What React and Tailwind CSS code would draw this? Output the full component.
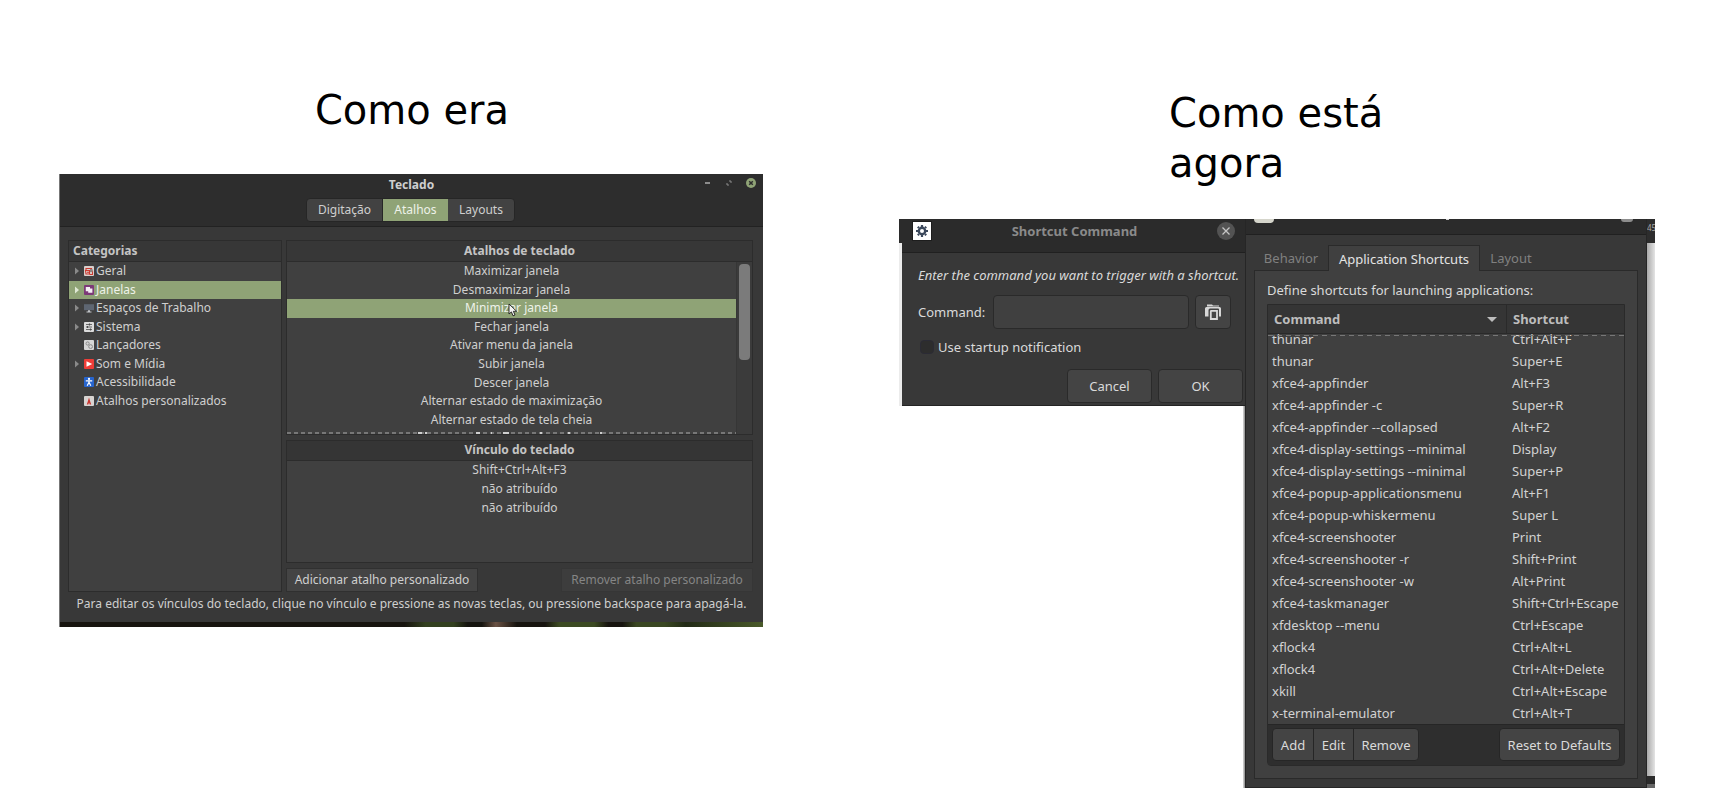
import React from "react";

const categories = [
  { name: "Geral", icon: "general", expandable: true },
  { name: "Janelas", icon: "windows", expandable: true, selected: true },
  { name: "Espaços de Trabalho", icon: "workspaces", expandable: true },
  { name: "Sistema", icon: "system", expandable: true },
  { name: "Lançadores", icon: "launchers" },
  { name: "Som e Mídia", icon: "media", expandable: true },
  { name: "Acessibilidade", icon: "access" },
  { name: "Atalhos personalizados", icon: "custom" },
];

const actions = [
  "Maximizar janela",
  "Desmaximizar janela",
  "Minimizar janela",
  "Fechar janela",
  "Ativar menu da janela",
  "Subir janela",
  "Descer janela",
  "Alternar estado de maximização",
  "Alternar estado de tela cheia",
];

const bindings = ["Shift+Ctrl+Alt+F3", "não atribuído", "não atribuído"];

const commands = [
  ["thunar", "Ctrl+Alt+F"],
  ["thunar", "Super+E"],
  ["xfce4-appfinder", "Alt+F3"],
  ["xfce4-appfinder -c", "Super+R"],
  ["xfce4-appfinder --collapsed", "Alt+F2"],
  ["xfce4-display-settings --minimal", "Display"],
  ["xfce4-display-settings --minimal", "Super+P"],
  ["xfce4-popup-applicationsmenu", "Alt+F1"],
  ["xfce4-popup-whiskermenu", "Super L"],
  ["xfce4-screenshooter", "Print"],
  ["xfce4-screenshooter -r", "Shift+Print"],
  ["xfce4-screenshooter -w", "Alt+Print"],
  ["xfce4-taskmanager", "Shift+Ctrl+Escape"],
  ["xfdesktop --menu", "Ctrl+Escape"],
  ["xflock4", "Ctrl+Alt+L"],
  ["xflock4", "Ctrl+Alt+Delete"],
  ["xkill", "Ctrl+Alt+Escape"],
  ["x-terminal-emulator", "Ctrl+Alt+T"],
];

function CategoryIcon({ kind }) {
  const art = {
    general: (
      <>
        <rect width="10" height="10" rx="1" fill="#d9cfcc" />
        <path d="M2 4.500V2.500H7.500V4M1.500 4.500H5.500V8H2ZM5.500 5H8.500V8.500H5.500M3 6.200H5" fill="none" stroke="#cb3a30" strokeWidth="1.100" />
        <path d="M6 3H8.500V6H6Z" fill="#8f8480" />
      </>
    ),
    windows: (
      <>
        <rect width="10" height="10" rx="1" fill="#7c3a78" />
        <path d="M1.800 2H6V3.400H8.400V7.800H4.200V6.200H1.800Z" fill="#f4eef4" />
      </>
    ),
    workspaces: (
      <>
        <path d="M0 1.200H10V7.200H0Z" fill="#5e6672" />
        <path d="M4 7.200H6V8.500H7.500V9.500H2.500V8.500H4Z" fill="#c3c6ca" />
      </>
    ),
    system: (
      <>
        <rect width="10" height="10" rx="1" fill="#dcdcdc" />
        <path d="M2 2.500H8M2 5H8M2 7.500H8" stroke="#6b6b6b" strokeWidth="1" />
        <path d="M5.500 1.500V3.500M3.500 4V6M6.500 6.500V8.500" stroke="#4c4c4c" strokeWidth="1.200" />
      </>
    ),
    launchers: (
      <>
        <rect width="10" height="10" rx="1" fill="#d6d6d6" />
        <circle cx="3.600" cy="3.500" r="1.600" fill="none" stroke="#8b8b8b" strokeWidth="1" />
        <circle cx="6.600" cy="6.600" r="1.900" fill="none" stroke="#8b8b8b" strokeWidth="1" />
      </>
    ),
    media: (
      <>
        <rect width="10" height="10" rx="1" fill="#ee3d38" />
        <path d="M2.500 2.200L8.200 5L2.500 7.800Z" fill="#fff" />
      </>
    ),
    access: (
      <>
        <rect width="10" height="10" rx="1" fill="#2765cf" />
        <circle cx="5" cy="1.900" r="1.100" fill="#fff" />
        <path d="M1.800 3.800H8.200M5 3.800V5.600M5 5.200L3.200 8.800M5 5.200L6.800 8.800" fill="none" stroke="#fff" strokeWidth="1.200" />
      </>
    ),
    custom: (
      <>
        <rect width="10" height="10" rx="1" fill="#d8d4d2" />
        <path d="M5 1.500L6.200 5.500L7.200 8.500H5.700L5 6.500L4.300 8.500H2.800L3.800 5.500Z" fill="#c8342e" />
      </>
    ),
  };
  return (
    <svg viewBox="0 0 10 10" className="h-[10px] w-[10px] shrink-0" aria-hidden="true">
      {art[kind]}
    </svg>
  );
}

function Triangle({ selected }) {
  return (
    <svg viewBox="0 0 4 8" className="h-2 w-1" aria-hidden="true">
      <path d="M0 0.500L4 4L0 7.500Z" fill={selected ? "#dfe8d4" : "#8a8a8a"} />
    </svg>
  );
}

function Pointer() {
  return (
    <svg viewBox="0 0 10 14" className="absolute top-1 left-1/2 h-[14px] w-[10px] -translate-x-1" aria-hidden="true">
      <path d="M1 1V11L3.400 8.900L5 12.800L7 12L5.400 8.300H8.600Z" fill="#f2f2f2" stroke="#1c1c1c" strokeWidth="0.900" />
    </svg>
  );
}

function OldWindow() {
  return (
    <section className="flex flex-col border-l border-[#777] bg-[#383838] text-[12px] leading-4 text-[#cfcfcf]">
      <header className="relative flex h-[53px] flex-col items-center border-b border-[#222] bg-[#2d2d2d]">
        <h2 className="mt-[3px] font-bold">Teclado</h2>
        <div className="absolute top-1 right-[7px] flex items-center gap-4">
          <button aria-label="Minimizar" className="flex h-[10px] w-[5px] items-center">
            <span className="h-[2px] w-full bg-[#8c8c8c]" />
          </button>
          <button aria-label="Maximizar" className="flex h-[10px] w-[6px] items-center">
            <svg viewBox="0 0 6 6" className="h-[6px] w-[6px]"><path d="M3 1H5V3M1 3V5H3" fill="none" stroke="#8c8c8c" /></svg>
          </button>
          <button aria-label="Fechar" className="-ml-[2px] h-[10px] w-[10px] rounded-full bg-[#8fa376]">
            <svg viewBox="0 0 10 10" className="h-[10px] w-[10px]"><path d="M3.200 3.200L6.800 6.800M6.800 3.200L3.200 6.800" stroke="#2d2d2d" strokeWidth="1.500" /></svg>
          </button>
        </div>
        <nav className="mt-[5px] mr-[2px] flex h-[24px] rounded-sm border border-[#262626] bg-[#424242]">
          <button className="w-[76px] border-r border-[#262626]">Digitação</button>
          <button className="w-[65px] bg-[#8fa376] text-[#eef2e9]">Atalhos</button>
          <button className="w-[66px]">Layouts</button>
        </nav>
      </header>

      <div className="flex gap-1 px-2 pt-[13px] pr-[10px]">
        <div className="flex w-[214px] flex-col border border-[#2c2c2c] bg-[#404040]">
          <h3 className="h-[21px] border-b border-[#2c2c2c] bg-[#373737] px-1 py-[2px] font-bold text-[#c4c4c4]">Categorias</h3>
          <ul className="grid h-[148px] auto-rows-fr">
            {categories.map((c) => (
              <li key={c.name} className={c.selected ? "flex items-center bg-[#8fa376] pl-[6px] text-[#eef2e9]" : "flex items-center pl-[6px]"}>
                <span className="w-[9px]">{c.expandable && <Triangle selected={c.selected} />}</span>
                <CategoryIcon kind={c.icon} />
                <span className="ml-[2px]">{c.name}</span>
              </li>
            ))}
          </ul>
        </div>

        <div className="flex min-w-0 flex-1 flex-col">
          <div className="h-[195px] overflow-hidden border border-[#2c2c2c] bg-[#404040]">
            <h3 className="h-[21px] border-b border-[#2c2c2c] bg-[#373737] py-[2px] text-center font-bold text-[#c4c4c4]">Atalhos de teclado</h3>
            <div className="flex h-[172px]">
              <div className="flex min-w-0 flex-1 flex-col border-r border-[#363636]">
                <ul className="grid h-[167px] auto-rows-fr text-center">
                  {actions.map((a) => (
                    <li key={a} className={a === "Minimizar janela" ? "relative flex items-center justify-center bg-[#8fa376] text-[#eef2e9]" : "flex items-center justify-center"}>
                      {a}
                      {a === "Minimizar janela" && <Pointer />}
                    </li>
                  ))}
                </ul>
                <div className="mt-[3px] flex h-[2px] justify-center bg-[repeating-linear-gradient(90deg,#777_0_4px,transparent_4px_7px)]">
                  <svg viewBox="0 0 192 2" className="h-[2px] w-[192px]" aria-hidden="true">
                    <path d="M2 1H6M9 1H11M60 1H64M75 1H76M87 1H93M124 1H126M152 1H154M184 1H186" stroke="#cfcfcf" strokeWidth="2" />
                  </svg>
                </div>
              </div>
              <div className="w-[15px] bg-[#3b3b3b] pt-[2px] pl-[2px]">
                <div className="h-[96px] w-[11px] rounded-sm bg-[#7b7b7b]" />
              </div>
            </div>
          </div>
          <div className="mt-[5px] h-[123px] border border-[#2c2c2c] bg-[#404040]">
            <h3 className="h-[20px] border-b border-[#2c2c2c] bg-[#353535] py-[1px] text-center font-bold text-[#c4c4c4]">Vínculo do teclado</h3>
            <ul className="grid h-[56px] auto-rows-fr">
              {bindings.map((b, i) => (
                <li key={i} className="flex items-center justify-center">{b}</li>
              ))}
            </ul>
          </div>
          <div className="mt-[5px] flex justify-between">
            <button className="h-[24px] w-[192px] border border-[#303030] bg-[#444]">Adicionar atalho personalizado</button>
            <button disabled className="h-[24px] w-[192px] border border-[#363636] bg-[#3d3d3d] text-[#858585]">Remover atalho personalizado</button>
          </div>
        </div>
      </div>
      <p className="h-[30px] pt-1 text-center whitespace-nowrap">
        Para editar os vínculos do teclado, clique no vínculo e pressione as novas teclas, ou pressione backspace para apagá-la.
      </p>
      <div className="h-[5px] bg-[linear-gradient(90deg,#17140f_0_49%,#33401f_52%_56%,#15140f_58%_60%,#6a5244_62%,#17140f_65%_69%,#3c4a22_71%_76%,#17140f_78%_80%,#3a4722_82%_86%,#222a16_89%,#4a5a2a_100%)]" />
    </section>
  );
}

function ShortcutDialog() {
  return (
    <section className="flex h-[187px] flex-col border-b border-[#242424] bg-[#383838] pb-[2px]">
      <header className="flex h-[34px] items-start justify-between border-b border-[#202020] bg-[#2b2b2b] pt-[2px] pr-[10px] pl-[10px]">
        <span className="flex h-[20px] w-[20px] items-center justify-center border border-[#1d1d1d] bg-white">
          <svg viewBox="0 0 12 12" className="h-3 w-3" aria-hidden="true">
            <circle cx="6" cy="6" r="3.200" fill="none" stroke="#3c495c" strokeWidth="2.400" />
            <path d="M6 0V2M6 10V12M0 6H2M10 6H12M1.800 1.800L3 3M9 9L10.200 10.200M10.200 1.800L9 3M3 9L1.800 10.200" stroke="#3c495c" strokeWidth="2.200" />
          </svg>
        </span>
        <h2 className="font-bold text-[#8a8a8a]">Shortcut Command</h2>
        <button aria-label="Close" className="mt-[1px] h-[18px] w-[18px] rounded-full bg-[#535353]">
          <svg viewBox="0 0 18 18" className="h-[18px] w-[18px]"><path d="M5.500 5.500L12.500 12.500M12.500 5.500L5.500 12.500" stroke="#c6c6c6" strokeWidth="1.300" /></svg>
        </button>
      </header>
      <p className="mt-[12px] pl-4 whitespace-nowrap italic">Enter the command you want to trigger with a shortcut.</p>
      <div className="mt-[10px] flex items-center pr-[14px] pl-4">
        <label htmlFor="command" className="w-[75px]">Command:</label>
        <input id="command" className="h-[34px] min-w-0 flex-1 rounded-sm border border-[#2a2a2a] bg-[#404040] px-2" />
        <button aria-label="Browse" className="ml-[6px] flex h-[34px] w-[36px] items-center justify-center rounded-sm border border-[#2a2a2a] bg-[#444]">
          <svg viewBox="0 0 16 16" className="h-4 w-4" aria-hidden="true">
            <path d="M2 2V0.500H7L8 1.500H14V2.500H2Z" fill="#d8d8d8" />
            <path d="M0 12.500V4.500Q0 3 1.500 3H14.500Q16 3 16 4.500V12.500H14V5.500Q14 4.500 13 4.500H5Q3.500 4.500 3.500 6V12.500Z" fill="#d8d8d8" />
            <path d="M5.800 15V7.300Q5.800 6.800 6.300 6.800H12V15Z" fill="none" stroke="#d8d8d8" strokeWidth="1.800" />
          </svg>
        </button>
      </div>
      <label className="mt-[8px] flex items-center gap-1 pl-[18px]">
        <input type="checkbox" className="h-[14px] w-[14px] appearance-none rounded-sm border border-[#2b2b35] bg-[#2d2d2d]" />
        Use startup notification
      </label>
      <div className="mt-auto flex justify-end gap-[6px] pr-[2px]">
        <button className="h-[34px] w-[85px] rounded-sm border border-[#2a2a2a] bg-[#444]">Cancel</button>
        <button className="h-[34px] w-[85px] rounded-sm border border-[#2a2a2a] bg-[#444]">OK</button>
      </div>
    </section>
  );
}

function KeyboardWindow() {
  return (
    <section className="flex min-w-0 flex-col border-x border-b border-[#262626] bg-[#383838] px-2 pb-[8px]">
      <header className="-mx-2 flex h-[16px] items-start justify-between border-b border-[#202020] bg-[#2b2b2b] px-2">
        <span className="h-1 w-5 rounded-b bg-[#d5d5cb]" />
        <span className="h-[1px] w-[3px] bg-[#cfcfcf]" />
        <span className="mr-[5px] h-[3px] w-[12px] rounded-b-full bg-[#8d8d8d]" />
      </header>
      <nav className="relative z-10 mt-[10px] -mb-px flex h-[26px]">
        <button className="w-[74px] text-[#808080]">Behavior</button>
        <button className="w-[152px] border border-b-0 border-[#2a2a2a] bg-[#404040] text-[#e4e4e4]">Application Shortcuts</button>
        <button className="w-[62px] text-[#808080]">Layout</button>
      </nav>
      <div className="border border-[#2a2a2a] bg-[#404040] px-3 pt-[9px] pb-[12px]">
        <p>Define shortcuts for launching applications:</p>
        <div className="mt-[4px] rounded-b-sm border border-[#2a2a2a]">
          <table className="block">
            <thead className="block h-[29px] border-b border-[#2a2a2a] bg-[#353535] text-[#bdbdbd]">
              <tr className="flex h-full items-center text-left">
                <th className="flex h-full flex-1 items-center justify-between border-r border-[#2a2a2a] px-[6px] pr-[9px] font-bold">
                  Command
                  <svg viewBox="0 0 10 5" className="h-[5px] w-[10px]" aria-hidden="true"><path d="M0 0H10L5 5Z" fill="#bdbdbd" /></svg>
                </th>
                <th className="w-[117px] pl-[6px] font-bold">Shortcut</th>
              </tr>
            </thead>
            <tbody className="relative flex h-[390px] flex-col justify-end overflow-hidden text-[#d2d2d2] before:absolute before:inset-x-0 before:top-px before:h-px before:bg-[repeating-linear-gradient(90deg,#777_0_5px,transparent_5px_9px)]">
              {commands.map(([cmd, keys], i) => (
                <tr key={i} className="flex h-[22px] shrink-0 items-center">
                  <td className="flex-1 pl-1">{cmd}</td>
                  <td className="w-[112px] whitespace-nowrap">{keys}</td>
                </tr>
              ))}
            </tbody>
          </table>
          <div className="flex h-[41px] justify-between border-t border-[#262626] bg-[#2e2e2e] px-1 pt-[3px]">
            <div className="flex h-[33px] rounded-sm border border-[#262626] bg-[#444]">
              <button className="w-[41px] border-r border-[#262626]">Add</button>
              <button className="w-[40px] border-r border-[#262626]">Edit</button>
              <button className="w-[64px]">Remove</button>
            </div>
            <button className="h-[33px] w-[121px] rounded-sm border border-[#262626] bg-[#444]">Reset to Defaults</button>
          </div>
        </div>
      </div>
    </section>
  );
}

export default function App() {
  return (
    <main className="min-h-screen bg-white font-['Noto_Sans',sans-serif]">
      <div className="grid grid-cols-[704fr_756fr] items-start gap-x-[136px] pr-[79px] pl-[59px]">
        <div>
          <h1 className="flex h-[174px] items-end justify-center pb-[39px] pl-[2px] font-['DejaVu_Sans',sans-serif] text-[40px] leading-[50px] text-black">Como era</h1>
          <OldWindow />
        </div>
        <div>
          <h1 className="ml-[270px] flex h-[219px] w-[240px] items-end pb-[31px] font-['DejaVu_Sans',sans-serif] text-[40px] leading-[50px] text-black">Como está agora</h1>
          <div className="grid grid-cols-[346fr_402fr_8px] text-[13px] leading-5 text-[#dadada]">
            <div className="flex min-w-0 flex-col">
              <div className="flex">
                <div className="flex w-[3px] flex-col">
                  <div className="h-[24px] bg-[#2b2b2b]" />
                  <div className="flex-1 bg-[#ececec]" />
                </div>
                <div className="min-w-0 flex-1"><ShortcutDialog /></div>
              </div>
              <div className="w-[2px] flex-1 self-end bg-linear-to-r from-[#ddd] to-[#888]" />
            </div>
            <KeyboardWindow />
            <div className="flex flex-col overflow-hidden bg-linear-to-r from-[#aaa] to-[#e4e4e4]">
              <div className="h-[24px] bg-[#2d2d2d] text-[8px] leading-[18px] text-[#aaa]">45</div>
              <div className="mt-auto h-[8px] bg-[#2b2b2b]" />
              <div className="h-[4px] bg-[#666]" />
            </div>
          </div>
        </div>
      </div>
    </main>
  );
}
